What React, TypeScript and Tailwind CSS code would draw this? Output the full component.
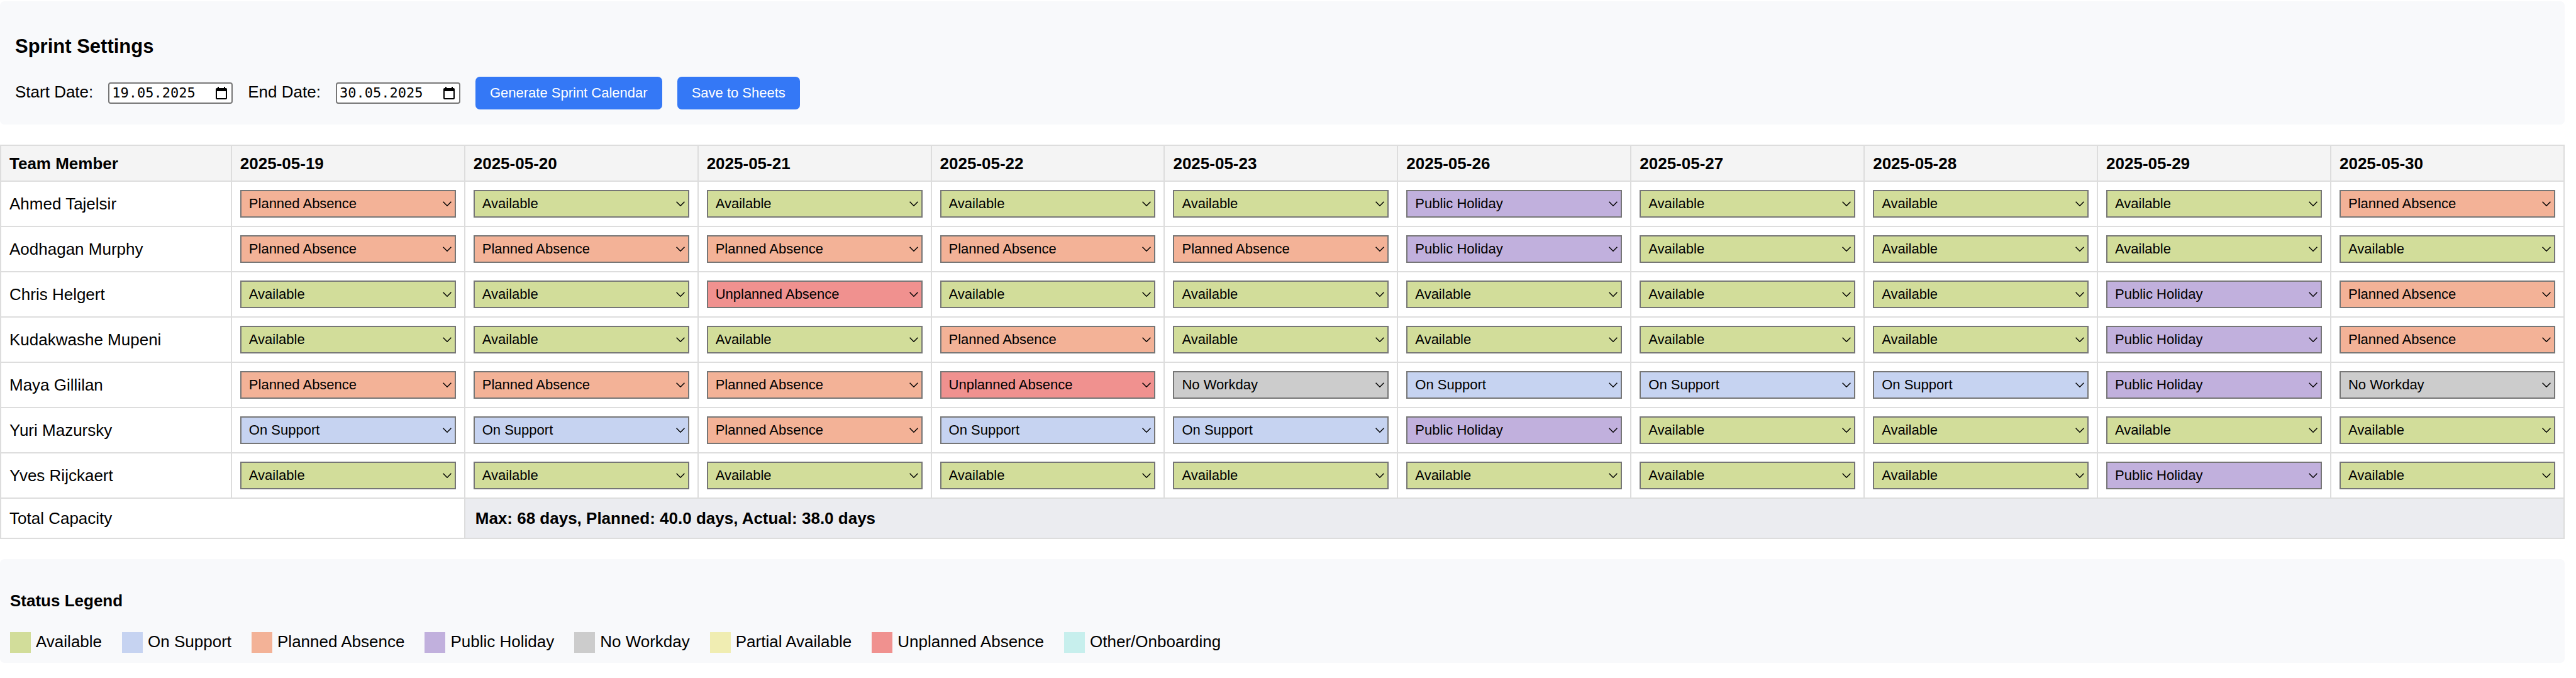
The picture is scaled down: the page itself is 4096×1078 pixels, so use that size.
import { useState } from "react";

const STATUS_COLORS: Record<string, string> = {
  Available: "bg-[#d2dd9a]",
  "On Support": "bg-[#c6d3f1]",
  "Planned Absence": "bg-[#f3b297]",
  "Public Holiday": "bg-[#c1b0dd]",
  "No Workday": "bg-[#cccccc]",
  "Partial Available": "bg-[#f0edb2]",
  "Unplanned Absence": "bg-[#f0918f]",
  "Other/Onboarding": "bg-[#c7efed]",
};

const STATUSES = Object.keys(STATUS_COLORS);

const DATES = [
  "2025-05-19",
  "2025-05-20",
  "2025-05-21",
  "2025-05-22",
  "2025-05-23",
  "2025-05-26",
  "2025-05-27",
  "2025-05-28",
  "2025-05-29",
  "2025-05-30",
];

const A = "Available";
const S = "On Support";
const P = "Planned Absence";
const H = "Public Holiday";
const N = "No Workday";
const U = "Unplanned Absence";

const TEAM: { name: string; days: string[] }[] = [
  { name: "Ahmed Tajelsir", days: [P, A, A, A, A, H, A, A, A, P] },
  { name: "Aodhagan Murphy", days: [P, P, P, P, P, H, A, A, A, A] },
  { name: "Chris Helgert", days: [A, A, U, A, A, A, A, A, H, P] },
  { name: "Kudakwashe Mupeni", days: [A, A, A, P, A, A, A, A, H, P] },
  { name: "Maya Gillilan", days: [P, P, P, U, N, S, S, S, H, N] },
  { name: "Yuri Mazursky", days: [S, S, P, S, S, H, A, A, A, A] },
  { name: "Yves Rijckaert", days: [A, A, A, A, A, A, A, A, H, A] },
];

function DateField({ id, label, initial }: { id: string; label: string; initial: string }) {
  const [value, setValue] = useState(initial);
  return (
    <>
      <label htmlFor={id}>{label}</label>
      <span className="inline-flex w-[198px] items-center rounded-[4px] border-2 border-[#767676] bg-white py-px pl-1 pr-[7px]">
        <input
          id={id}
          type="text"
          inputMode="numeric"
          value={value}
          onChange={(e) => setValue(e.target.value)}
          className="h-7 min-w-0 flex-1 bg-transparent font-['DejaVu_Sans_Mono',monospace] text-[22px] leading-7 outline-none"
        />
        <svg viewBox="0 0 18 20" className="h-5 w-[18px] shrink-0" aria-hidden="true">
          <path
            fillRule="evenodd"
            d="M3 0h2v2h8V0h2v2h1a2 2 0 0 1 2 2v14a2 2 0 0 1-2 2H2a2 2 0 0 1-2-2V4a2 2 0 0 1 2-2h1zM2 7v11h14V7z"
          />
        </svg>
      </span>
    </>
  );
}

function StatusSelect({ label, initial }: { label: string; initial: string }) {
  const [status, setStatus] = useState(initial);
  return (
    <div className="relative">
      <select
        aria-label={label}
        value={status}
        onChange={(e) => setStatus(e.target.value)}
        className={`block h-11 w-full appearance-none border-2 border-[#767676] pl-3 pr-8 text-[22px] leading-[26px] ${STATUS_COLORS[status]}`}
      >
        {STATUSES.map((s) => (
          <option key={s}>{s}</option>
        ))}
      </select>
      <svg
        viewBox="0 0 14 8"
        className="pointer-events-none absolute top-[18px] right-[7px] h-2 w-3.5 fill-none stroke-black stroke-[1.5]"
        aria-hidden="true"
      >
        <path d="M.6 .8 7 7.200l6.400-6.400" />
      </svg>
    </div>
  );
}

export default function App() {
  return (
    <main className="mr-[18px] pt-0.5 font-['Liberation_Sans',Arial,sans-serif] text-[26px] leading-[30px] text-black">
      <section className="rounded-[7px] bg-[#f8f9fb] p-6">
        <h3 className="mt-[30px] text-[31px] leading-[35px] font-bold">Sprint Settings</h3>
        <div className="mt-[31px] flex flex-wrap items-baseline gap-6">
          <DateField id="start-date" label="Start Date:" initial="19.05.2025" />
          <DateField id="end-date" label="End Date:" initial="30.05.2025" />
          <button
            type="button"
            className="rounded-[7px] bg-[#3478f6] px-[23px] py-[13px] text-[22px] leading-[26px] text-white"
          >
            Generate Sprint Calendar
          </button>
          <button
            type="button"
            className="rounded-[7px] bg-[#3478f6] px-[23px] py-[13px] text-[22px] leading-[26px] text-white"
          >
            Save to Sheets
          </button>
        </div>
      </section>

      <table className="mt-8 w-full table-fixed border-collapse text-left [&_td]:border-2 [&_td]:border-[#dddddd] [&_th]:border-2 [&_th]:border-[#dddddd]">
        <thead>
          <tr className="h-[57px] bg-[#f4f4f4]">
            <th scope="col" className="w-[9%] px-[13px]">
              Team Member
            </th>
            {DATES.map((date) => (
              <th key={date} scope="col" className="px-[13px]">
                {date}
              </th>
            ))}
          </tr>
        </thead>
        <tbody>
          {TEAM.map(({ name, days }) => (
            <tr key={name}>
              <td className="px-[13px]">{name}</td>
              {days.map((status, i) => (
                <td key={DATES[i]} className="p-[13px]">
                  <StatusSelect label={`${name}, ${DATES[i]}`} initial={status} />
                </td>
              ))}
            </tr>
          ))}
          <tr className="h-16">
            <td colSpan={2} className="px-[13px]">
              Total Capacity
            </td>
            <td colSpan={9} className="bg-[#ebecf0] px-4 font-bold">
              Max: 68 days, Planned: 40.0 days, Actual: 38.0 days
            </td>
          </tr>
        </tbody>
      </table>

      <section className="mt-8 rounded-[7px] bg-[#f8f9fb] p-4">
        <h4 className="mt-[35px] font-bold">Status Legend</h4>
        <ul className="mt-[35px] flex flex-wrap gap-x-8 gap-y-4">
          {STATUSES.map((s) => (
            <li key={s} className="flex items-start gap-2">
              <span className={`size-[33px] ${STATUS_COLORS[s]}`} />
              {s}
            </li>
          ))}
        </ul>
      </section>
    </main>
  );
}
